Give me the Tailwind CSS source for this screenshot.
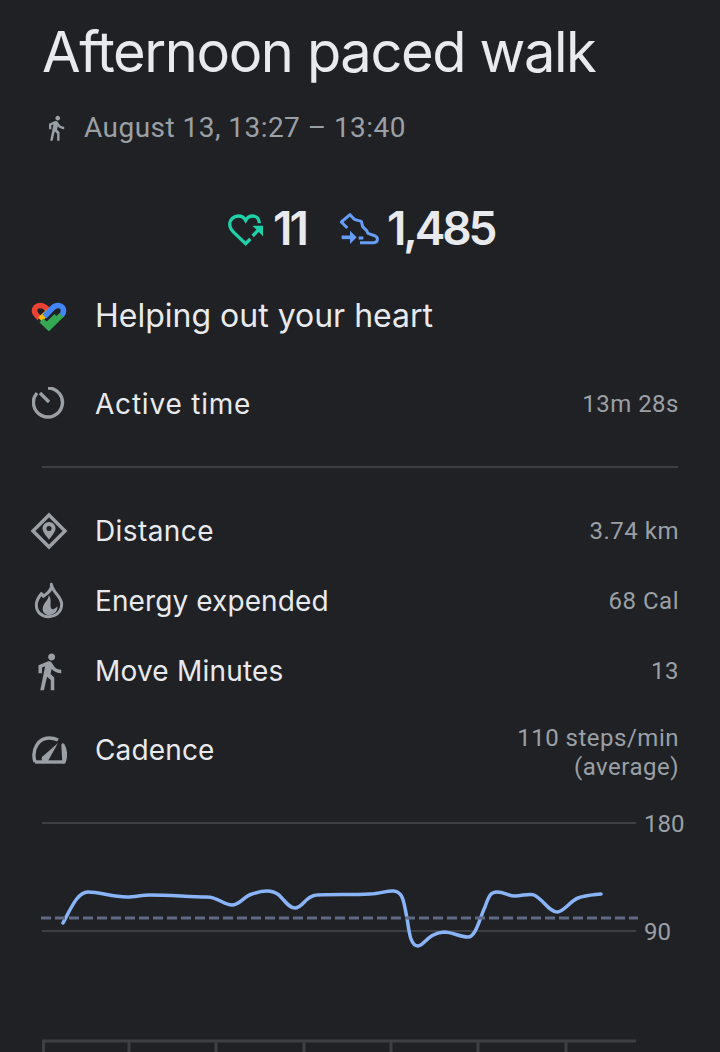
<!DOCTYPE html>
<html lang="en">
<head>
  <meta charset="UTF-8" />
  <title>Afternoon paced walk</title>
  <script src="https://cdn.jsdelivr.net/npm/@tailwindcss/browser@4"></script>
</head>
<body class="bg-[#202124] font-['Roboto',sans-serif] w-[720px] h-[1052px] overflow-hidden">

  <!-- Title -->
  <h1 class="pl-[42px] pt-[17px] h-[70px] text-[56px] leading-[70px] text-[#e8eaed] font-['Inter',sans-serif] font-normal tracking-[-1.4px] whitespace-nowrap">Afternoon paced walk</h1>

  <!-- Date -->
  <div class="flex items-center pl-[42px] mt-[42px] h-[32px]">
    <svg class="w-[28px] h-[28px]" viewBox="0 0 24 24" fill="#9aa0a6"><path d="M13.500 5.500c1.100 0 2-.9 2-2s-.9-2-2-2-2 .9-2 2 .9 2 2 2zM9.800 8.900L7 23h2.100l1.800-8 2.100 2v6h2v-7.500l-2.100-2 .6-3C14.800 12 16.800 13 19 13v-2c-1.900 0-3.500-1-4.300-2.400l-1-1.600c-.4-.6-1-1-1.700-1-.3 0-.5.1-.8.1L6 8.300V13h2V9.600l1.800-.7"/></svg>
    <span class="ml-[14px] text-[28px] text-[#9aa0a6] tracking-[0.46px]">August 13, 13:27 – 13:40</span>
  </div>

  <!-- Goals -->
  <div class="flex items-center mt-[59px] h-[50px] pl-[224px]">
    <svg class="w-[44px] h-[40px]" viewBox="0 0 132 120" fill="none" stroke="#1ed1a8" stroke-width="10"><path d="M106 46C106 30 96 24 86 24 76 24 69 30 65 37 61 30 54 24 44 24 28 24 17 36 17 48 17 58 22 66 30 74L65 107 79 93"/><path d="M86 84L106 63" stroke-width="10"/><path d="M85 53H117V85z" fill="#1ed1a8" stroke="none"/></svg>
    <span class="w-[68px] pl-[5px] text-[46px] font-['Inter',sans-serif] font-semibold text-[#e8eaed] tracking-[-3px]">11</span>
    <svg class="w-[46px] h-[40px]" viewBox="0 0 138 120" fill="none" stroke="#669df6" stroke-width="9" stroke-linejoin="round"><path d="M34 60L16 42 42 20 55 34 76 40 80 56 92 68 96 76 118 84C128 90 126 104 112 104H72"/><path d="M68 90H82"/><path d="M17 88H50" stroke-width="11"/><path d="M42 68L62 88 42 108z" fill="#669df6" stroke="none"/></svg>
    <span class="ml-[5px] text-[46px] font-['Inter',sans-serif] font-semibold text-[#e8eaed] tracking-[-3.2px]">1,485</span>
  </div>

  <!-- Heart row -->
  <div class="flex items-center mt-[33px] h-[60px]">
    <svg class="ml-[31px] w-[36px] h-[30px]" viewBox="0 0 36 30" fill="none" stroke-width="5.6"><path d="M17.500 10C15 6 12 4.500 9 4.500 5.500 4.500 3.500 7 3.500 10 3.500 12.500 5 14 8.500 17" stroke="#ea4335"/><path d="M9 18.500L17.500 10.500" stroke="#fbbc04"/><path d="M13.500 15.500L21.500 7C24 4.500 26 4.500 27.500 4.500 30.500 4.500 32.500 7 32.500 10 32.500 11.500 32 13 30.500 14.500" stroke="#4285f4"/><path d="M30.500 14L17.800 26.500 10.500 19.500M15.500 24.500L25.500 15" stroke="#34a853"/></svg>
    <span class="ml-[28px] text-[32px] text-[#e8eaed] font-['Inter',sans-serif]">Helping out your heart</span>
  </div>

  <div class="flex items-center justify-between mt-[28px] h-[60px] pr-[41px]">
    <div class="flex items-center">
      <svg class="ml-[32px] w-[34px] h-[34px]" viewBox="0 2 34 34" fill="none" stroke="#9aa0a6" stroke-width="3.4"><path d="M16 3a14.500 14.500 0 1 1-11 5"/><path d="M8 8l9 9"/></svg>
      <span class="ml-[29px] text-[28px] text-[#e8eaed] font-['Inter',sans-serif] tracking-[0.8px]">Active time</span>
    </div>
    <span class="text-[24px] text-[#9aa0a6] tracking-[0.5px]">13m 28s</span>
  </div>

  <div class="mx-[42px] mt-[32px] h-[2px] bg-[#3c4043]"></div>

  <div class="flex items-center justify-between mt-[33px] h-[60px] pr-[41px]">
    <div class="flex items-center">
      <svg class="ml-[30px] w-[38px] h-[38px]" viewBox="0 0 38 38" fill="none" stroke="#9aa0a6" stroke-width="3.4"><path d="M19 3l16 16-16 16L3 19z"/><path d="M19 10c-4 0-6.500 3-6.500 6.500 0 4 6.500 11 6.500 11s6.500-7 6.500-11C25.500 13 23 10 19 10z" fill="#9aa0a6" stroke="none"/><circle cx="19" cy="16.500" r="2.500" fill="#202124" stroke="none"/></svg>
      <span class="ml-[27px] text-[28px] text-[#e8eaed] font-['Inter',sans-serif] tracking-[0.4px]">Distance</span>
    </div>
    <span class="text-[24px] text-[#9aa0a6] tracking-[0.5px]">3.74 km</span>
  </div>

  <div class="flex items-center justify-between mt-[10px] h-[60px] pr-[41px]">
    <div class="flex items-center">
      <svg class="ml-[28px] w-[44px] h-[44px]" viewBox="0 0 132 132" fill="none" stroke="#9aa0a6" stroke-width="9" stroke-linejoin="round"><path d="M70 16C74 34 56 44 46 52 44 48 42 46 40 44 30 56 25 66 25 78 25 100 42 113 61 113 84 113 101 98 101 76 101 52 76 44 70 16z"/><path d="M62 48C64 62 44 72 44 90 44 102 54 108 64 108 78 108 90 98 88 82 80 92 70 94 68 84 66 74 72 62 62 48z" fill="#9aa0a6" stroke="none"/></svg>
      <span class="ml-[23px] text-[28px] text-[#e8eaed] font-['Inter',sans-serif] tracking-[0.1px]">Energy expended</span>
    </div>
    <span class="text-[24px] text-[#9aa0a6] tracking-[0.5px]">68 Cal</span>
  </div>

  <div class="flex items-center justify-between mt-[10px] h-[60px] pr-[41px]">
    <div class="flex items-center">
      <svg class="ml-[28px] w-[42px] h-[41px]" viewBox="0 0 24 24" preserveAspectRatio="none" fill="#9aa0a6"><path d="M13.500 5.500c1.100 0 2-.9 2-2s-.9-2-2-2-2 .9-2 2 .9 2 2 2zM9.800 8.900L7 23h2.100l1.800-8 2.100 2v6h2v-7.500l-2.100-2 .6-3C14.800 12 16.800 13 19 13v-2c-1.900 0-3.500-1-4.300-2.400l-1-1.600c-.4-.6-1-1-1.700-1-.3 0-.5.1-.8.1L6 8.300V13h2V9.600l1.800-.7"/></svg>
      <span class="ml-[25px] text-[28px] text-[#e8eaed] font-['Inter',sans-serif] tracking-[0.2px]">Move Minutes</span>
    </div>
    <span class="text-[24px] text-[#9aa0a6] tracking-[0.5px]">13</span>
  </div>

  <div class="flex items-center justify-between mt-[15px] h-[68px] pr-[41px]">
    <div class="flex items-center">
      <svg class="ml-[31px] w-[36px] h-[30px]" viewBox="0 0 36 30" fill="none" stroke="#9aa0a6" stroke-width="3.4" stroke-linejoin="round"><path d="M4 27C0 14 8 3 18 3c4 0 7 1 9 2"/><path d="M32 10c3 5 3 12 1 17z"/><path d="M4 27H33"/><path d="M11 22L27 8l-10 18c-2 3-8 0-6-4z" fill="#9aa0a6" stroke="none"/></svg>
      <span class="ml-[28px] text-[28px] text-[#e8eaed] font-['Inter',sans-serif] tracking-[0.15px]">Cadence</span>
    </div>
    <span class="mt-[5px] text-[24px] leading-[29px] text-right text-[#9aa0a6] tracking-[0.5px]">110 steps/min<br />(average)</span>
  </div>

  <!-- Chart: the svg uses page coordinates minus its own top of 810 -->
  <div class="relative mt-[26px] h-[242px]">
    <svg class="w-[720px] h-[242px]" viewBox="0 810 720 242" fill="none">
      <path d="M42 823H636M42 931H636" stroke="#3c4043" stroke-width="2"/>
      <path d="M42 1041H636" stroke="#3c4043" stroke-width="3"/>
      <path d="M43.500 1041V1052M129 1041V1052M216 1041V1052M304 1041V1052M391 1041V1052M478 1041V1052M566 1041V1052" stroke="#3c4043" stroke-width="3"/>
      <path d="M63 923C72 906 78 892 88 892C100 892 112 897 127 897C135 897 142 895 150 895C170 895 190 897 207 897C218 897 224 905 232 905C240 905 244 896 252 894C258 892 262 891 267 891C272 891 275 892 279 895C285 901 289 908 295 908C303 908 306 895 317 895C335 894 350 895 370 894C380 894 388 890 394 891C404 892 404 905 407 918C409 930 410 946 418 946C424 946 428 933 444 932C452 932 460 937 468 937C476 937 480 917 485 907C489 895 491 892 497 892C505 892 508 896 515 896C522 896 530 893 534 895C543 899 549 912 557 912C564 912 570 901 578 898C586 895 592 895 601 894" stroke="#8ab4f8" stroke-width="3.500" stroke-linecap="round"/>
      <path d="M41 918H638" stroke="#5f6b85" stroke-width="3" stroke-dasharray="10 4"/>
    </svg>
    <span class="absolute left-[644px] top-[0px] text-[24px] leading-[28px] text-[#9aa0a6]">180</span>
    <span class="absolute left-[644px] top-[108px] text-[24px] leading-[28px] text-[#9aa0a6]">90</span>
  </div>

</body>
</html>
